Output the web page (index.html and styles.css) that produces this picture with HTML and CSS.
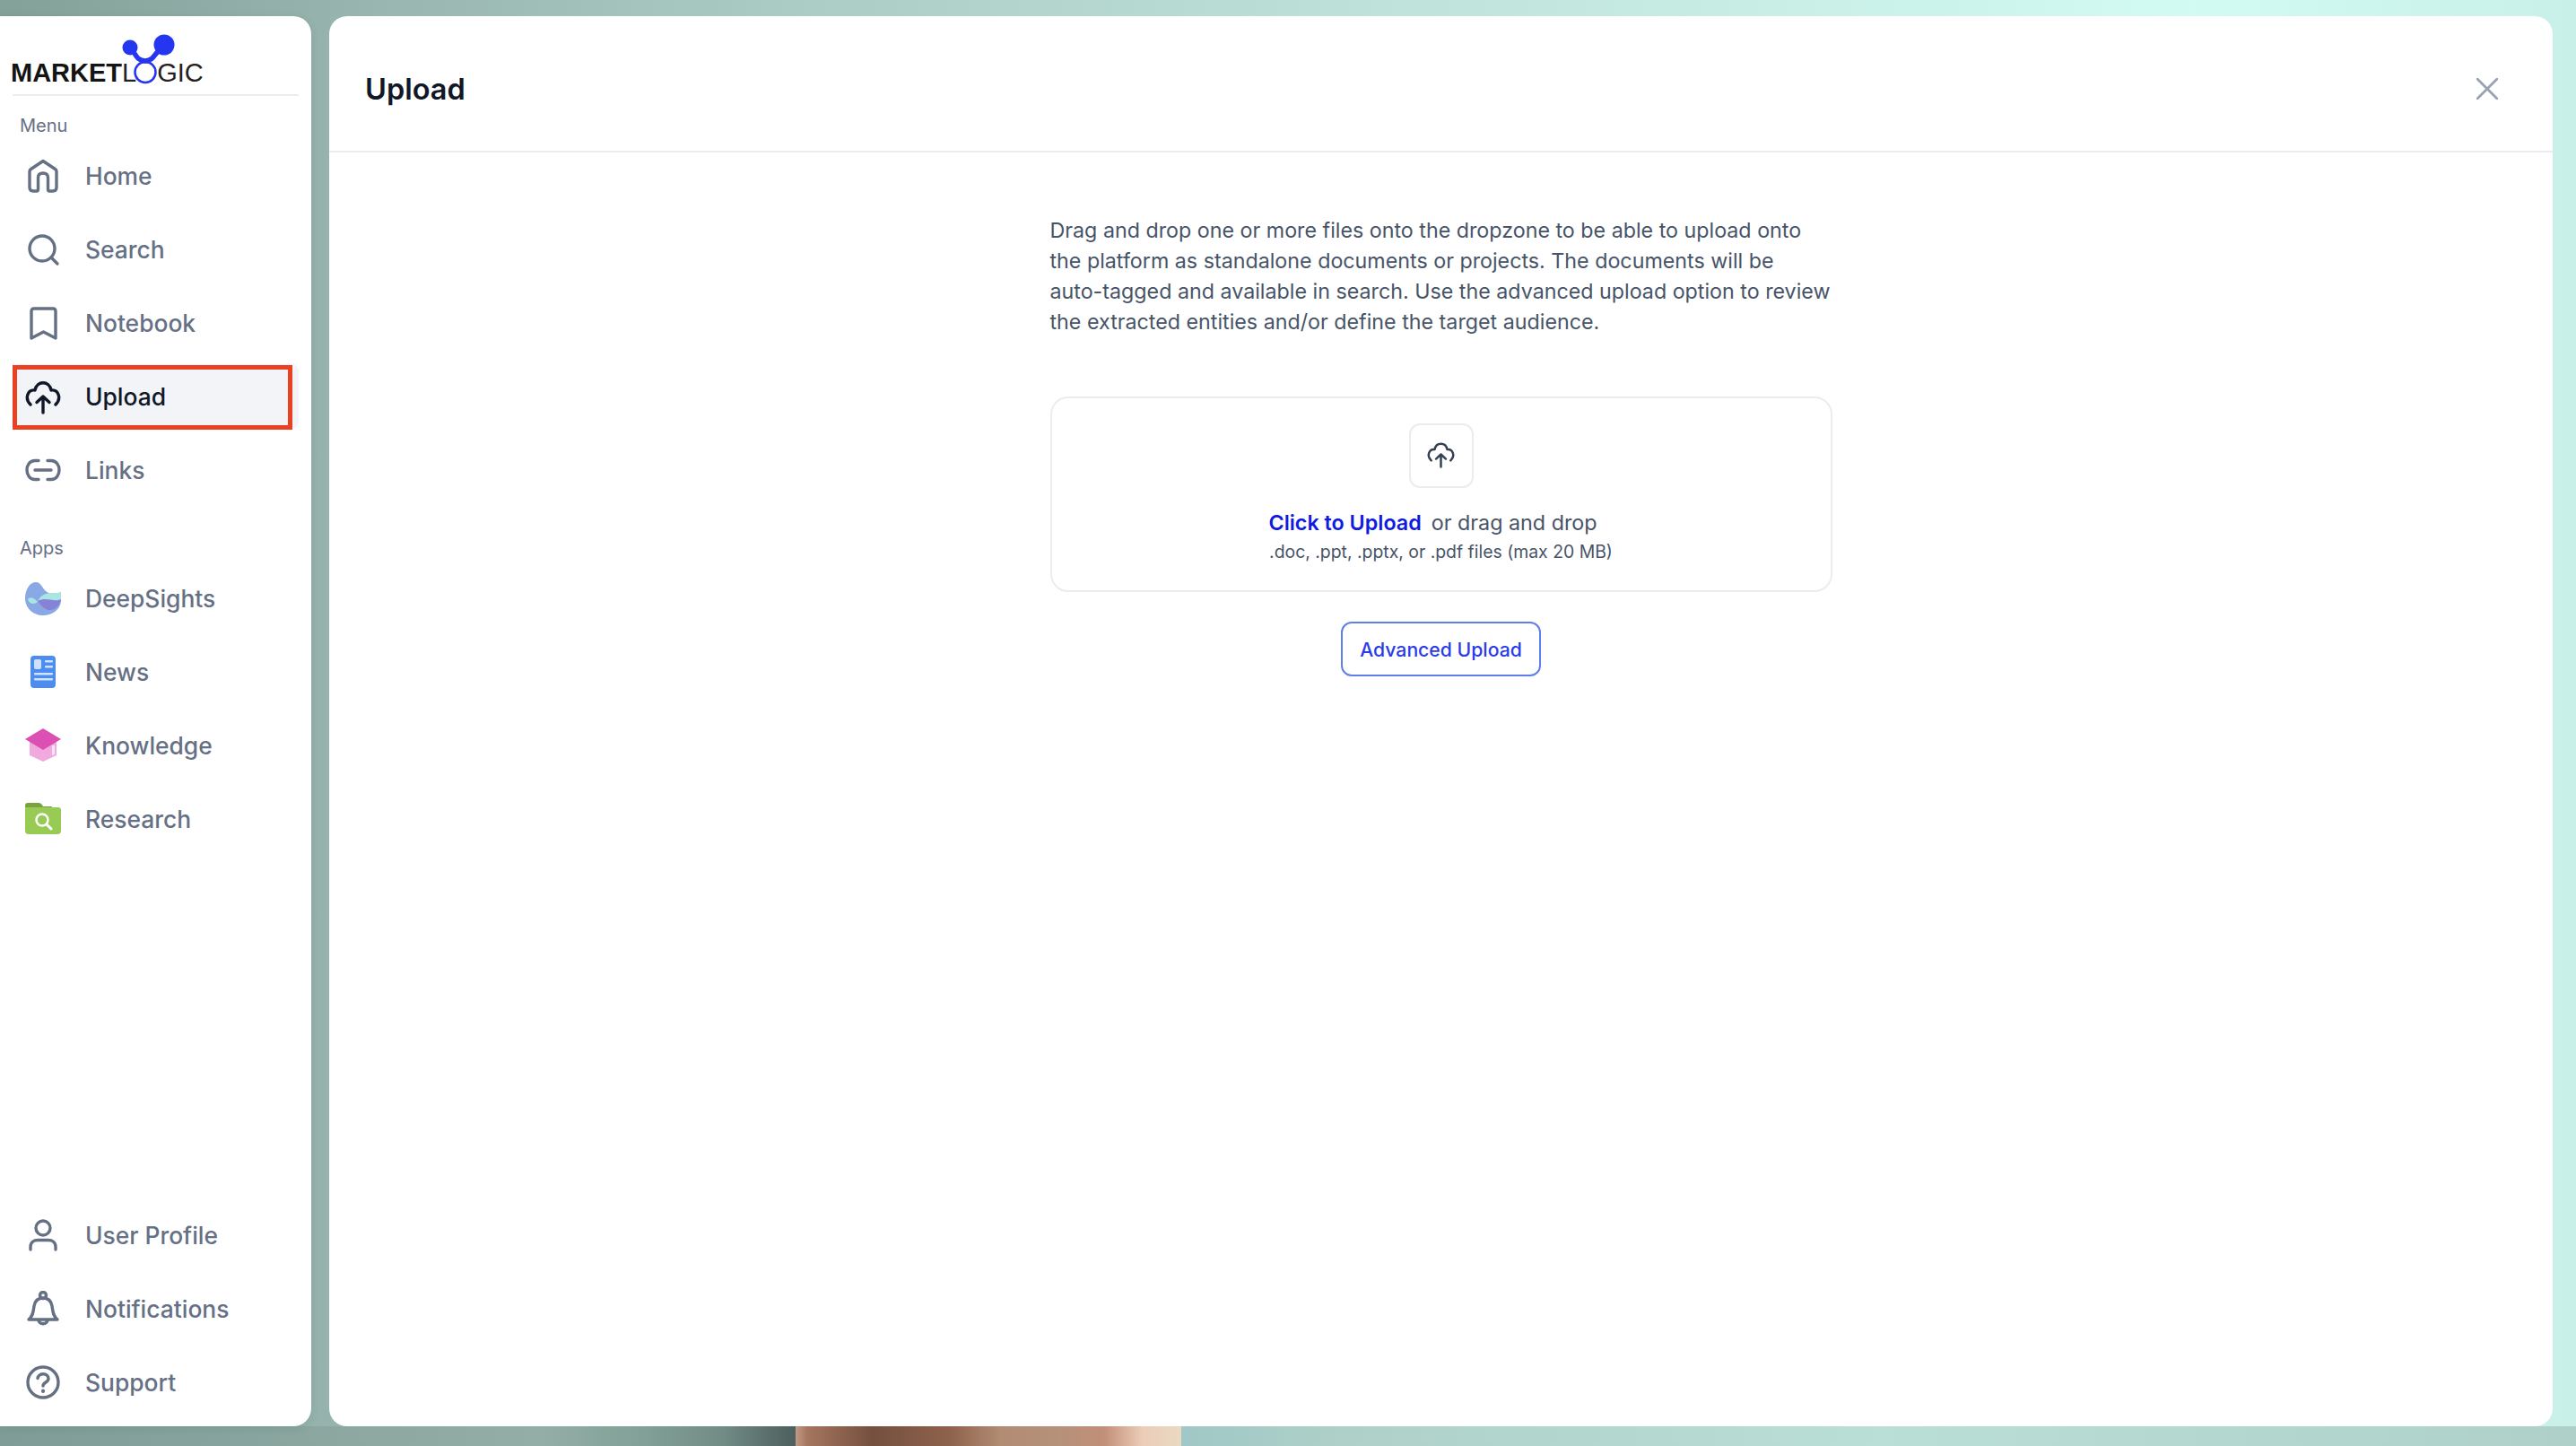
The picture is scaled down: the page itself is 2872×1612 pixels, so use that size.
FILE: index.html
```html
<!DOCTYPE html>
<html lang="en">
<head>
<meta charset="utf-8">
<title>Upload</title>
<link rel="stylesheet" href="styles.css">
</head>
<body>
<div class="backdrop">
  <div class="backdrop-top"></div>
  <div class="backdrop-bottom"><div class="face"></div></div>
</div>
<div class="shell">
  <aside class="sidebar">
    <div class="brand">
      <div class="logo">
        <svg class="logo-mark" viewBox="0 0 68 60" aria-hidden="true">
          <circle cx="15" cy="17" r="8.500" fill="#2536f0"/>
          <circle cx="53" cy="14" r="11.500" fill="#2536f0"/>
          <path d="M17 20 C22 24 21 31 32 32 C43 31 42 22 49 20" fill="none" stroke="#2536f0" stroke-width="5.500" stroke-linecap="round"/>
          <circle cx="32" cy="44.500" r="11.500" fill="none" stroke="#2536f0" stroke-width="2.500"/>
        </svg>
        <span class="logo-bold">MARKET</span><span class="logo-light">L</span><span class="logo-gap"></span><span class="logo-light">GIC</span>
      </div>
    </div>
    <div class="section-label">Menu</div>
    <nav class="nav">
      <a class="nav-item"><svg class="ico" viewBox="0 0 40 40"><path d="M5 15 Q5 13.500 6.500 12.500 L20 3.500 L33.500 12.500 Q35 13.500 35 15 V33 Q35 37 31 37 H27 Q25.500 37 25.500 35 V22 Q25.500 17 20 17 Q14.500 17 14.500 22 V35 Q14.500 37 13 37 H9 Q5 37 5 33 Z"/></svg><span>Home</span></a>
      <a class="nav-item"><svg class="ico" viewBox="0 0 40 40"><circle cx="19" cy="19" r="14"/><path d="M29 29 L36 36"/></svg><span>Search</span></a>
      <a class="nav-item"><svg class="ico" viewBox="0 0 40 40"><path d="M7 7 Q7 4 10 4 H31 Q34 4 34 7 V37 L20.500 30 L7 37 Z"/></svg><span>Notebook</span></a>
      <a class="nav-item active"><svg class="ico" viewBox="0 0 40 40"><path d="M20 38 V20 M13 26.500 L20 20 L27 26.500"/><path d="M6 29 C-1 22 3 12 11 13 C13 2 27 2 29 13 C37 12 41 22 34 29"/></svg><span>Upload</span></a>
      <a class="nav-item"><svg class="ico" viewBox="0 0 40 40"><path d="M15 9.500 H11 C-1 9.500 -1 30.500 11 30.500 H15 M25 9.500 H29 C41 9.500 41 30.500 29 30.500 H25 M11 20 H29"/></svg><span>Links</span></a>
    </nav>
    <div class="section-label apps">Apps</div>
    <nav class="nav">
      <a class="nav-item"><svg class="ico filled" viewBox="0 0 40 40">
        <path d="M11 2 C17 1 19 8 23 12 C28 16 34 15 40 13 V22 C40 32 31 39 20 39 C9 39 0 31 0 20 C0 12 4 3 11 2 Z" fill="#8aa9e4"/>
        <path d="M14 23 C22 17 30 23 40 21 C39 28 33 34 26 33 C21 32 17 27 14 23 Z" fill="#8682d6"/>
        <path d="M14 23 C22 9 32 17 40 13 V21 C32 25 24 18 14 23 Z" fill="#a7e6e3"/>
        <path d="M3 21 C7 17 11 21 14 24 C10 27 5 27 3 21 Z" fill="#a7e6e3"/>
      </svg><span>DeepSights</span></a>
      <a class="nav-item"><svg class="ico filled" viewBox="0 0 40 40">
        <rect x="6" y="2" width="28" height="36" rx="4" fill="#4d8df0"/>
        <rect x="10" y="6" width="8" height="11" rx="2" fill="#cfe2fb"/>
        <rect x="22" y="7" width="9" height="2.500" rx="1" fill="#cfe2fb"/>
        <rect x="22" y="13" width="9" height="2.500" rx="1" fill="#cfe2fb"/>
        <rect x="10" y="21" width="21" height="2.500" rx="1" fill="#cfe2fb"/>
        <rect x="10" y="27" width="21" height="2.500" rx="1" fill="#cfe2fb"/>
      </svg><span>News</span></a>
      <a class="nav-item"><svg class="ico filled" viewBox="0 0 40 40">
        <path d="M5 15 L20 24 L35 15 V31 L20 38 L5 31 Z" fill="#f0aadd"/>
        <path d="M0 13 L20 1 L40 13 L20 25 Z" fill="#dc4fb3"/>
        <path d="M30 20 H33 V30 L30 31 Z" fill="#fbe3f4"/>
      </svg><span>Knowledge</span></a>
      <a class="nav-item"><svg class="ico filled" viewBox="0 0 40 40">
        <path d="M0 5 Q0 2 3 2 H15 Q18 2 20 6 H30 V9 H0 Z" fill="#7aa33c"/>
        <path d="M0 7 H37 Q40 7 40 10 V33 Q40 37 36 37 H4 Q0 37 0 33 Z" fill="#98cb54"/>
        <circle cx="19" cy="21" r="6.500" fill="none" stroke="#fff" stroke-width="2.500"/>
        <path d="M24 26 L29 31" stroke="#fff" stroke-width="3" stroke-linecap="round"/>
      </svg><span>Research</span></a>
    </nav>
    <nav class="nav nav-bottom">
      <a class="nav-item"><svg class="ico" viewBox="0 0 40 40"><circle cx="20" cy="12" r="8"/><path d="M6 36 V33 C6 28 10 25.500 14 25.500 H26 C30 25.500 34 28 34 33 V36"/></svg><span>User Profile</span></a>
      <a class="nav-item"><svg class="ico" viewBox="0 0 40 40"><path d="M4 32 H36 C31 28 31 23 30 17 C29 11 25 8 20 8 C15 8 11 11 10 17 C9 23 9 28 4 32 Z"/><circle cx="20" cy="5" r="3.500"/><path d="M15 33 C16 38 24 38 25 33"/></svg><span>Notifications</span></a>
      <a class="nav-item"><svg class="ico" viewBox="0 0 40 40"><circle cx="20" cy="20" r="17"/><path d="M14 15.500 C15 9 26 9 26 16 C26 20 20 20 20 24"/><path class="dot" d="M20 29.500 V30"/></svg><span>Support</span></a>
    </nav>
  </aside>
  <main class="panel">
    <header class="panel-head">
      <h1>Upload</h1>
      <svg class="close" viewBox="0 0 24 24"><path d="M1 1 L23 23 M23 1 L1 23"/></svg>
    </header>
    <div class="panel-body">
      <div class="column">
        <p class="intro">Drag and drop one or more files onto the dropzone to be able to upload onto<br>the platform as standalone documents or projects. The documents will be<br>auto-tagged and available in search. Use the advanced upload option to review<br>the extracted entities and/or define the target audience.</p>
        <div class="dropzone">
          <div class="drop-icon"><svg viewBox="0 0 40 40"><path d="M20 38 V20 M13 26.500 L20 20 L27 26.500"/><path d="M6 29 C-1 22 3 12 11 13 C13 2 27 2 29 13 C37 12 41 22 34 29"/></svg></div>
          <div class="drop-line"><span class="drop-link">Click to Upload</span><span class="drop-or">or drag and drop</span></div>
          <div class="drop-hint">.doc, .ppt, .pptx, or .pdf files (max 20 MB)</div>
        </div>
        <button class="advanced">Advanced Upload</button>
      </div>
    </div>
  </main>
</div>
</body>
</html>
```
FILE: styles.css
```css
* { box-sizing: border-box; }
html, body { margin: 0; height: 100%; }
body {
  width: 2872px;
  height: 1612px;
  overflow: hidden;
  position: relative;
  font-family: "Inter", "Liberation Sans", sans-serif;
  background: linear-gradient(90deg, #83a099 0%, #97b3ad 13%, #a9cbc3 30%, #c0e3db 55%, #d2fbf3 85%, #c8f0e8 100%);
}
.backdrop { position: absolute; inset: 0; display: flex; flex-direction: column; justify-content: flex-end; }
.backdrop-top { flex: 1; }
.backdrop-bottom {
  height: 22px;
  position: relative;
  background: linear-gradient(90deg, #7f9c96 0%, #93aea7 21%, #82a097 25%, #728c86 28%, #4e605f 30.800%, #a0c8c6 45.900%, #aed0c8 52%, #badfd7 73%, #aed0c8 100%);
}
.face {
  position: absolute; left: 887px; top: 0; width: 430px; height: 22px;
  background: linear-gradient(90deg, #c09a85 0%, #a5765f 3%, #75503f 20%, #8e624c 40%, #b28b73 53%, #b5917a 67%, #c28f78 80%, #eccdb8 90%, #ead9c2 100%);
}
.shell {
  position: relative;
  height: 100%;
  padding: 18px 26px 22px 0;
  display: flex;
  gap: 20px;
}
.sidebar {
  width: 347px;
  flex: none;
  background: #fff;
  border-radius: 0 20px 20px 0;
  padding: 14px;
  display: flex;
  flex-direction: column;
  box-shadow: 0 2px 10px rgba(40, 70, 65, .12);
}
.brand { height: 75px; border-bottom: 2px solid #eaecf0; flex: none; }
.logo {
  position: relative;
  padding-top: 32px;
  display: flex;
  align-items: baseline;
  color: #141414;
  font-family: "Liberation Sans", sans-serif;
  font-size: 29px;
  line-height: 34px;
  white-space: nowrap;
}
.logo-mark { position: absolute; left: 116px; top: 4px; width: 68px; height: 60px; }
.logo-bold { font-weight: 700; margin-left: -2px; }
.logo-light { font-weight: 400; color: #222; }
.logo-gap { width: 23px; }
.section-label { margin: 18px 0 0 8px; font-size: 20px; line-height: 30px; color: #667085; }
.section-label.apps { margin-top: 36px; }
.nav { display: flex; flex-direction: column; gap: 10px; margin-top: 5px; }
.nav-bottom { margin-top: auto; margin-bottom: -1px; }
.nav-item {
  height: 72px;
  display: flex;
  align-items: center;
  gap: 27px;
  padding-left: 14px;
  font-size: 26.400px;
  font-weight: 500;
  color: #667085;
  border-radius: 8px;
}
.nav-item.active {
  position: relative;
  color: #101828;
  background: #f2f4f8;
}
.nav-item.active::after {
  content: "";
  position: absolute;
  left: 0;
  right: 7px;
  top: 1px;
  bottom: -1px;
  border: 5px solid #ea4122;
}
.ico {
  width: 40px;
  height: 40px;
  flex: none;
  fill: none;
  stroke: currentColor;
  stroke-width: 3.400;
  stroke-linecap: round;
  stroke-linejoin: round;
}
.ico.filled { stroke: none; }
.ico .dot { stroke-width: 4; }
.panel {
  flex: 1;
  background: #fff;
  border-radius: 20px;
  display: flex;
  flex-direction: column;
  overflow: hidden;
}
.panel-head {
  height: 152px;
  flex: none;
  border-bottom: 2px solid #eaecf0;
  display: flex;
  align-items: center;
  justify-content: space-between;
  padding: 12px 61px 0 40px;
}
.panel-head h1 { margin: 0; font-size: 32.500px; font-weight: 600; color: #101828; }
.close { width: 24px; height: 24px; fill: none; stroke: #98a2b3; stroke-width: 2.800; stroke-linecap: round; }
.panel-body { flex: 1; display: flex; justify-content: center; }
.column { width: 872px; display: flex; flex-direction: column; align-items: center; }
.intro {
  margin: 70px 0 0;
  width: 100%;
  font-size: 23.250px;
  line-height: 34px;
  color: #475467;
  white-space: nowrap;
}
.dropzone {
  width: 100%;
  height: 218px;
  margin-top: 66px;
  border: 2px solid #eaecf0;
  border-radius: 20px;
  display: flex;
  flex-direction: column;
  align-items: center;
  padding-top: 28px;
}
.drop-icon {
  width: 72px;
  height: 72px;
  border: 2px solid #eaecf0;
  border-radius: 12px;
  display: flex;
  align-items: center;
  justify-content: center;
}
.drop-icon svg { width: 31px; height: 31px; margin-bottom: 3px; fill: none; stroke: #344054; stroke-width: 3.200; stroke-linecap: round; stroke-linejoin: round; }
.drop-line { margin-top: 22px; padding-right: 18px; font-size: 23.300px; line-height: 34px; display: flex; gap: 11px; }
.drop-link { color: #0f1be0; font-weight: 600; }
.drop-or { color: #475467; }
.drop-hint { font-size: 19.400px; line-height: 30px; color: #475467; }
.advanced {
  margin-top: 33px;
  width: 223px;
  height: 61px;
  background: #fff;
  border: 2px solid #5f80ea;
  border-radius: 12px;
  color: #2c3be8;
  font: 500 21.200px "Inter", "Liberation Sans", sans-serif;
  padding: 0;
}
```
